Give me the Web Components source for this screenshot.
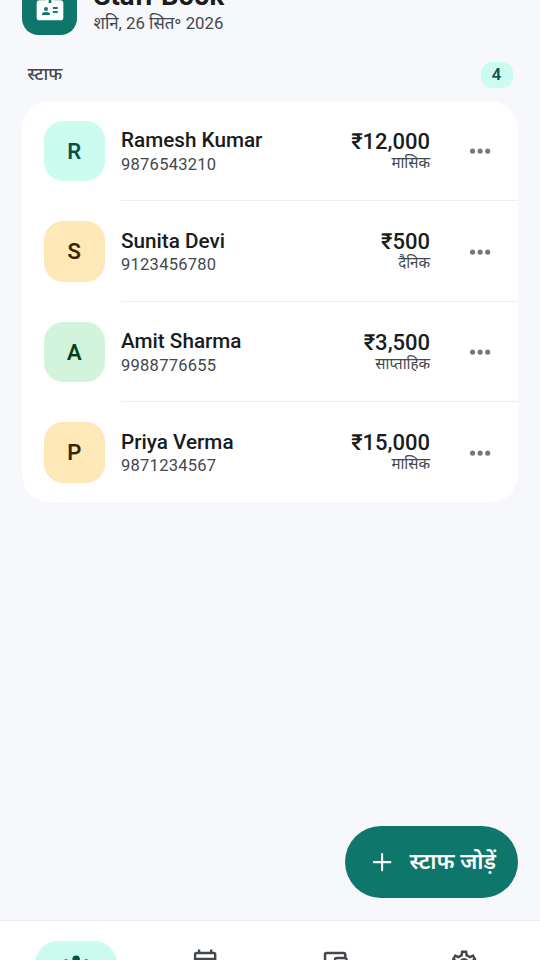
<!DOCTYPE html>
<html lang="hi">
<head>
<meta charset="utf-8">
<title>Staff Book</title>
<style>
html,body{margin:0;height:100%;overflow:hidden}
body{font-family:Roboto,"Noto Sans Devanagari","Noto Sans",sans-serif;color:#191c20;background:#f6f8fc}
</style>
</head>
<body>
<staff-app></staff-app>
<script>
const ICONS={
badge:'<path fill-rule="evenodd" d="M20 7h-5V4c0-1.1-.9-2-2-2h-2c-1.1 0-2 .9-2 2v3H4c-1.1 0-2 .9-2 2v11c0 1.1.9 2 2 2h16c1.1 0 2-.9 2-2V9c0-1.1-.9-2-2-2zM9 12a1.5 1.5 0 1 1 0 3 1.5 1.5 0 0 1 0-3zm3 6H6v-.43c0-.6.36-1.15.92-1.39.64-.28 1.34-.43 2.08-.43s1.44.15 2.08.43c.56.24.92.78.92 1.39V18zm1-9h-2V4h2v5zm4.25 7.5h-2.5a.75.75 0 0 1 0-1.5h2.5a.75.75 0 0 1 0 1.5zm0-3h-2.5a.75.75 0 0 1 0-1.5h2.5a.75.75 0 0 1 0 1.5z"/>',
more:'<circle cx="6" cy="12" r="2"/><circle cx="12" cy="12" r="2"/><circle cx="18" cy="12" r="2"/>',
plus:'<path d="M18.5 12.8h-5.7v5.7c0 .45-.35.8-.8.8s-.8-.35-.8-.8v-5.7H5.5c-.45 0-.8-.35-.8-.8s.35-.8.8-.8h5.7V5.5c0-.45.35-.8.8-.8s.8.35.8.8v5.7h5.7c.45 0 .8.35.8.8s-.35.8-.8.8z"/>',
groups:'<path d="M12 12.75c1.63 0 3.07.39 4.24.9 1.08.48 1.76 1.56 1.76 2.73V18H6v-1.61c0-1.18.68-2.26 1.76-2.73 1.17-.52 2.61-.91 4.24-.91zM4 13a2 2 0 1 0 0-4 2 2 0 0 0 0 4zm16 0a2 2 0 1 0 0-4 2 2 0 0 0 0 4zM12 6a3 3 0 1 1 0 6 3 3 0 0 1 0-6z"/>',
calendar:'<g fill="none" stroke="currentColor" stroke-width="1.9"><rect x="4" y="4" width="16" height="16.5" rx="1.2"/><path d="M4 8.6h16M7.2 4V1.1M16.8 4V1.1"/></g>',
wallet:'<path d="M21 7.28V5c0-1.1-.9-2-2-2H5c-1.11 0-2 .9-2 2v14c0 1.1.89 2 2 2h14c1.1 0 2-.9 2-2v-2.28c.59-.35 1-.98 1-1.72V9c0-.74-.41-1.37-1-1.72zM20 9v6h-7V9h7zM5 19V5h14v2h-6c-1.1 0-2 .9-2 2v6c0 1.1.9 2 2 2h6v2H5z"/><circle cx="16" cy="12" r="1.5"/>',
settings:'<path d="M19.43 12.98c.04-.32.07-.64.07-.98 0-.34-.03-.66-.07-.98l2.11-1.65c.19-.15.24-.42.12-.64l-2-3.46c-.09-.16-.26-.25-.44-.25-.06 0-.12.01-.17.03l-2.49 1c-.52-.4-1.08-.73-1.69-.98l-.38-2.65C14.46 2.18 14.25 2 14 2h-4c-.25 0-.46.18-.49.42l-.38 2.65c-.61.25-1.17.59-1.69.98l-2.49-1c-.06-.02-.12-.03-.18-.03-.17 0-.34.09-.43.25l-2 3.46c-.13.22-.07.49.12.64l2.11 1.65c-.04.32-.07.65-.07.98 0 .33.03.66.07.98l-2.11 1.65c-.19.15-.24.42-.12.64l2 3.46c.09.16.26.25.44.25.06 0 .12-.01.17-.03l2.49-1c.52.4 1.08.73 1.69.98l.38 2.65c.03.24.24.42.49.42h4c.25 0 .46-.18.49-.42l.38-2.65c.61-.25 1.17-.59 1.69-.98l2.49 1c.06.02.12.03.18.03.17 0 .34-.09.43-.25l2-3.46c.12-.22.07-.49-.12-.64l-2.11-1.65zm-1.98-1.71c.04.31.05.52.05.73 0 .21-.02.43-.05.73l-.14 1.13.89.7 1.08.84-.7 1.21-1.27-.51-1.04-.42-.9.68c-.43.32-.84.56-1.25.73l-1.06.43-.16 1.13-.2 1.35h-1.4l-.19-1.35-.16-1.13-1.06-.43c-.43-.18-.83-.41-1.23-.71l-.91-.7-1.06.43-1.27.51-.7-1.21 1.08-.84.89-.7-.14-1.13c-.03-.31-.05-.54-.05-.74s.02-.43.05-.73l.14-1.13-.89-.7-1.08-.84.7-1.21 1.27.51 1.04.42.9-.68c.43-.32.84-.56 1.25-.73l1.06-.43.16-1.13.2-1.35h1.39l.19 1.35.16 1.13 1.06.43c.43.18.83.41 1.23.71l.91.7 1.06-.43 1.27-.51.7 1.21-1.07.85-.89.7.14 1.13zM12 8c-2.21 0-4 1.79-4 4s1.79 4 4 4 4-1.79 4-4-1.79-4-4-4zm0 6a2 2 0 1 1 0-4 2 2 0 0 1 0 4z"/>'
};
function define(name,render){
  customElements.define(name,class extends HTMLElement{
    connectedCallback(){
      if(this.shadowRoot)return;
      this.attachShadow({mode:'open'}).innerHTML=render(this);
    }
  });
}
define('ui-icon',el=>`<style>
:host{display:block;width:var(--size,30.25px);height:var(--size,30.25px);flex:none}
svg{display:block;width:100%;height:100%;fill:currentColor}
</style><svg viewBox="0 0 24 24">${ICONS[el.getAttribute('name')]}</svg>`);

define('app-header',()=>`<style>
:host{display:flex;align-items:center;gap:16.5px;height:55px;margin-top:-20.5px;padding:0 22px;flex:none}
.logo{display:grid;place-items:center;width:55px;height:55px;border-radius:16.5px;background:#0f766b;color:#fff;--size:32px}
.text{display:flex;flex-direction:column}
.title{font-size:27.5px;line-height:34px;font-weight:700;white-space:nowrap}
.date{font-size:16.8px;line-height:22px;margin-top:-1px;padding-bottom:1px;color:#43474e;white-space:nowrap}
</style><div class="logo"><ui-icon name="badge"></ui-icon></div>
<div class="text"><div class="title"><slot name="title"></slot></div><div class="date"><slot name="date"></slot></div></div>`);

define('section-head',el=>`<style>
:host{display:flex;align-items:center;justify-content:space-between;height:26px;margin:27.5px 27.5px 13px;flex:none}
.label{font-size:17.6px;line-height:24px;padding-bottom:2px;font-weight:500;color:#43474e}
.count{box-sizing:border-box;width:32px;height:26px;border-radius:11px;background:#ccfbef;color:#0b4f47;font-size:16.5px;line-height:26px;font-weight:500;-webkit-text-stroke:.15px currentColor;text-align:center}
</style><div class="label"><slot></slot></div><div class="count">${el.getAttribute('count')}</div>`);

define('staff-card',()=>`<style>
:host{display:flex;flex-direction:column;margin:0 22px;border-radius:27.5px;background:#fff;overflow:hidden;flex:none}
</style><slot></slot>`);

define('staff-row',el=>`<style>
:host{display:flex;flex-direction:column}
.row{display:flex;align-items:center;box-sizing:border-box;height:99.1px;padding:1.4px 23.2px 0 22px}
.avatar{display:grid;place-items:center;width:60.5px;height:60.5px;border-radius:19.25px;font-size:22px;font-weight:500;-webkit-text-stroke:.2px currentColor;flex:none}
.mint{background:#ccfbef;color:#0b4f47}.amber{background:#ffe8b8;color:#3a2400}.green{background:#d2f3dc;color:#073d18}
.who{flex:1;margin-left:16.5px;padding-top:1px;display:flex;flex-direction:column}
.name{font-size:20.7px;line-height:26.5px;font-weight:500;white-space:nowrap}
.phone{font-size:16.5px;line-height:22.5px;letter-spacing:.26px;color:#43474e}
.pay{display:flex;flex-direction:column;text-align:right;margin-right:34.5px;margin-top:-1px}
.amount{font-size:22px;line-height:25px;font-weight:500}
.period{font-size:15.1px;line-height:19px;color:#43474e}
.more{color:#74777f}
.line{height:1.375px;margin-left:99px;background:#eceef4}
:host(:last-child) .line{display:none}
</style><div class="row"><div class="avatar ${el.getAttribute('tone')}">${el.getAttribute('name')[0]}</div>
<div class="who"><div class="name">${el.getAttribute('name')}</div><div class="phone">${el.getAttribute('phone')}</div></div>
<div class="pay"><div class="amount">${el.getAttribute('amount')}</div><div class="period">${el.getAttribute('period')}</div></div>
<ui-icon class="more" name="more"></ui-icon></div><div class="line"></div>`);

define('add-button',()=>`<style>
:host{display:flex;align-items:center;justify-content:space-between;box-sizing:border-box;width:173px;height:71.5px;padding:0 22px;border-radius:36px;background:#0f766b;color:#fff;margin:auto 22px 22.5px auto;flex:none}
span{font-size:22.3px;line-height:28px;padding-bottom:1px;font-weight:600;white-space:nowrap}
</style><ui-icon name="plus"></ui-icon><span><slot></slot></span>`);

define('nav-item',()=>`<style>
:host{display:flex;justify-content:center;flex:1;color:#43474e}
.pill{display:grid;place-items:center;width:82.5px;height:46px;border-radius:23px}
:host([active]) .pill{background:#ccfbef;color:#0b4f47}
</style><div class="pill"><slot></slot></div>`);

define('bottom-nav',()=>`<style>
:host{display:flex;box-sizing:border-box;height:40px;padding:19.5px 11px 0;border-top:1px solid #e8ebf1;background:#fff;overflow:hidden;flex:none}
</style><slot></slot>`);

define('staff-app',()=>`<style>
:host{display:flex;flex-direction:column;width:540px;height:960px;overflow:hidden}
</style>
<app-header><span slot="title">Staff Book</span><span slot="date">शनि, 26 सित॰ 2026</span></app-header>
<section-head count="4">स्टाफ</section-head>
<staff-card>
<staff-row tone="mint" name="Ramesh Kumar" phone="9876543210" amount="₹12,000" period="मासिक"></staff-row>
<staff-row tone="amber" name="Sunita Devi" phone="9123456780" amount="₹500" period="दैनिक"></staff-row>
<staff-row tone="green" name="Amit Sharma" phone="9988776655" amount="₹3,500" period="साप्ताहिक"></staff-row>
<staff-row tone="amber" name="Priya Verma" phone="9871234567" amount="₹15,000" period="मासिक"></staff-row>
</staff-card>
<add-button>स्टाफ जोड़ें</add-button>
<bottom-nav>
<nav-item active><ui-icon name="groups"></ui-icon></nav-item>
<nav-item><ui-icon name="calendar"></ui-icon></nav-item>
<nav-item><ui-icon name="wallet"></ui-icon></nav-item>
<nav-item><ui-icon name="settings"></ui-icon></nav-item>
</bottom-nav>`);
</script>
</body>
</html>
